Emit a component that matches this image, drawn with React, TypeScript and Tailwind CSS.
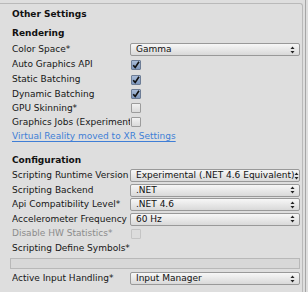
import React from 'react';

const font = { fontFamily: '"DejaVu Sans", "Liberation Sans", sans-serif' };

const Arrows: React.FC = () => (
  <svg width="5" height="8" viewBox="0 0 5 8" className="shrink-0">
    <path d="M2.5 0.5 L4.5 3 L0.5 3 Z" fill="#222" />
    <path d="M2.5 7.5 L4.5 5 L0.5 5 Z" fill="#222" />
  </svg>
);

const Dropdown: React.FC<{ value: string }> = ({ value }) => (
  <div className="w-[170px] h-[13px] flex items-center justify-between pl-[5px] pr-[4px] rounded-[2px] border border-[#999] bg-gradient-to-b from-[#f7f7f7] to-[#d9d9d9] text-[9px] leading-none text-[#111] overflow-hidden whitespace-nowrap">
    <span>{value}</span>
    <Arrows />
  </div>
);

const Checkbox: React.FC<{ checked?: boolean; disabled?: boolean }> = ({ checked, disabled }) => (
  <div
    className={
      checked
        ? 'ml-px w-[10px] h-[10px] rounded-[1px] border border-[#6d7d96] bg-gradient-to-b from-[#a9bcd8] to-[#7f98bd] flex items-center justify-center'
        : disabled
        ? 'ml-px w-[10px] h-[10px] rounded-[1px] border border-[#c4c4c4] bg-[#dcdcdc]'
        : 'ml-px w-[10px] h-[10px] rounded-[1px] border border-[#9c9c9c] bg-gradient-to-b from-[#f2f2f2] to-[#dadada]'
    }
  >
    {checked && (
      <svg width="8" height="8" viewBox="0 0 8 8">
        <path d="M1.2 4.2 L3.2 6.4 L7 0.8" stroke="#111" strokeWidth="1.6" fill="none" />
      </svg>
    )}
  </div>
);

const Row: React.FC<{ label: string; h: string; muted?: boolean; children?: React.ReactNode }> = ({ label, h, muted, children }) => (
  <div className={`flex items-center ${h}`}>
    <div className={`w-[118px] shrink-0 overflow-hidden whitespace-nowrap text-[9px] leading-none ${muted ? 'text-[#8c8c8c]' : 'text-[#161616]'}`}>
      {label}
    </div>
    {children}
  </div>
);

export default function App() {
  return (
    <div className="w-[308px] h-[292px] bg-[#dedede] flex overflow-hidden" style={font}>
      <div className="w-[303px] pt-[3px]">
        <div className="h-[289px] border-t border-r border-[#b9b9b9] rounded-tr-[3px] pl-[12px]">
          <div className="h-[21px] flex items-center text-[9px] font-bold text-[#111] leading-none">Other Settings</div>

          <div className="h-[17px] flex items-center text-[9px] font-bold text-[#111] leading-none">Rendering</div>
          <Row label="Color Space*" h="h-[15px]">
            <Dropdown value="Gamma" />
          </Row>
          <Row label="Auto Graphics API" h="h-[15px]">
            <Checkbox checked />
          </Row>
          <Row label="Static Batching" h="h-[15px]">
            <Checkbox checked />
          </Row>
          <Row label="Dynamic Batching" h="h-[14px]">
            <Checkbox checked />
          </Row>
          <Row label="GPU Skinning*" h="h-[14px]">
            <Checkbox />
          </Row>
          <Row label="Graphics Jobs (Experimental)*" h="h-[14px]">
            <Checkbox />
          </Row>
          <div className="h-[14px] flex items-center">
            <span className="text-[9px] leading-none text-[#3f7ed6] underline underline-offset-2">
              Virtual Reality moved to XR Settings
            </span>
          </div>

          <div className="h-[9px]" />
          <div className="h-[16px] flex items-center text-[9px] font-bold text-[#111] leading-none">Configuration</div>
          <Row label="Scripting Runtime Version" h="h-[15px]">
            <Dropdown value="Experimental (.NET 4.6 Equivalent)" />
          </Row>
          <Row label="Scripting Backend" h="h-[14px]">
            <Dropdown value=".NET" />
          </Row>
          <Row label="Api Compatibility Level*" h="h-[15px]">
            <Dropdown value=".NET 4.6" />
          </Row>
          <Row label="Accelerometer Frequency" h="h-[14px]">
            <Dropdown value="60 Hz" />
          </Row>
          <Row label="Disable HW Statistics*" h="h-[15px]" muted>
            <Checkbox disabled />
          </Row>
          <Row label="Scripting Define Symbols*" h="h-[14px]" />
          <div className="h-[16px] flex items-center -ml-[2px]">
            <div className="w-[290px] h-[11px] border border-[#b8b8b8] bg-[#d8d8d8]" />
          </div>
          <Row label="Active Input Handling*" h="h-[15px]">
            <Dropdown value="Input Manager" />
          </Row>
        </div>
      </div>
      <div className="w-[2px]" />
      <div className="w-px bg-[#a6a6a6]" />
      <div className="w-[2px]" />
    </div>
  );
}
